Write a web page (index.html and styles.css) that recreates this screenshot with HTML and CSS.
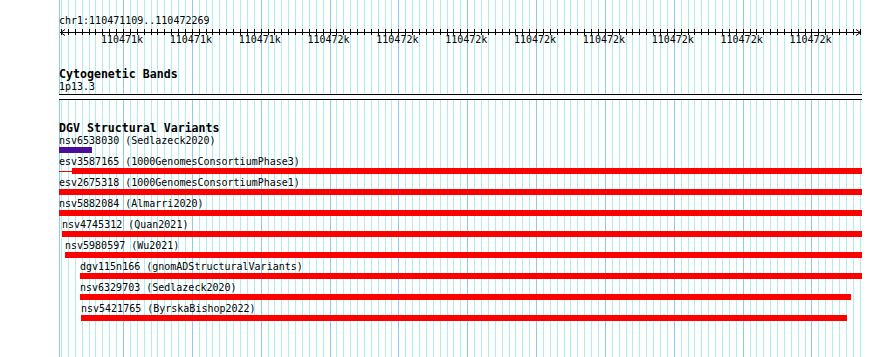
FILE: index.html
```html
<!DOCTYPE html>
<html>
<head>
<meta charset="utf-8">
<link rel="stylesheet" href="styles.css">
</head>
<body>
<div class="view">
  <svg class="grid" width="803" height="357" shape-rendering="crispEdges">
    <path class="grid-edge" d="M0.5 0V357"></path>
    <path class="grid-minor" d=""></path>
    <path class="grid-major" d=""></path>
  </svg>

  <div class="ruler">
    <div class="loc">chr1:110471109..110472269</div>
    <svg class="scale" width="803" height="7" shape-rendering="crispEdges">
      <path class="scale-line" d="M1 5.5H802"></path>
      <path class="scale-ticks" d=""></path>
      <path class="scale-arrow" d="M6 2.5L1.5 5.5L6 8.5" shape-rendering="auto"></path>
      <path class="scale-arrow" d="M797 2.5L801.5 5.5L797 8.5" shape-rendering="auto"></path>
    </svg>
    <div class="scale-labels">
      <span>110471k</span><span>110471k</span><span>110471k</span><span>110472k</span><span>110472k</span><span>110472k</span><span>110472k</span><span>110472k</span><span>110472k</span><span>110472k</span><span>110472k</span>
    </div>
  </div>

  <section class="track cyto">
    <h2 class="track-title">Cytogenetic Bands</h2>
    <div class="band-name">1p13.3</div>
  </section>

  <div class="divider"></div>

  <section class="track dgv">
    <h2 class="track-title">DGV Structural Variants</h2>

    <div class="feature" style="margin-left:0px">
      <div class="label">nsv6538030 (Sedlazeck2020)</div>
      <div class="bar bar-loss" style="width:33px"></div>
    </div>
    <div class="feature" style="margin-left:0px">
      <div class="label">esv3587165 (1000GenomesConsortiumPhase3)</div>
      <div class="bar-wrap">
        <div class="stub" style="width:13px"></div>
        <div class="bar bar-gain" style="width:790px"></div>
      </div>
    </div>
    <div class="feature" style="margin-left:0px">
      <div class="label">esv2675318 (1000GenomesConsortiumPhase1)</div>
      <div class="bar bar-gain" style="width:803px"></div>
    </div>
    <div class="feature" style="margin-left:0px">
      <div class="label">nsv5882084 (Almarri2020)</div>
      <div class="bar bar-gain" style="width:803px"></div>
    </div>
    <div class="feature" style="margin-left:3px">
      <div class="label">nsv4745312 (Quan2021)</div>
      <div class="bar bar-gain" style="width:800px"></div>
    </div>
    <div class="feature" style="margin-left:6px">
      <div class="label">nsv5980597 (Wu2021)</div>
      <div class="bar bar-gain" style="width:797px"></div>
    </div>
    <div class="feature" style="margin-left:21px">
      <div class="label">dgv115n166 (gnomADStructuralVariants)</div>
      <div class="bar bar-gain" style="width:782px"></div>
    </div>
    <div class="feature" style="margin-left:21px">
      <div class="label">nsv6329703 (Sedlazeck2020)</div>
      <div class="bar bar-gain" style="width:771px"></div>
    </div>
    <div class="feature" style="margin-left:22px">
      <div class="label">nsv5421765 (ByrskaBishop2022)</div>
      <div class="bar bar-gain" style="width:766px"></div>
    </div>
  </section>
</div>
<script src="script.js"></script>
</body>
</html>
```

FILE: styles.css
```css
html, body {
  margin: 0;
  padding: 0;
  background: #ffffff;
  overflow: hidden;
}

body {
  font-family: "DejaVu Sans Mono", "Liberation Mono", monospace;
  font-size: 10px;
  color: #000000;
  width: 890px;
  height: 357px;
}

.view {
  position: relative;
  margin-left: 59px;
  width: 803px;
  height: 357px;
}

.grid {
  position: absolute;
  left: 0;
  top: 0;
  z-index: 0;
}

.grid-minor {
  stroke: #afeeee;
  stroke-width: 1;
  fill: none;
}

.grid-major,
.grid-edge {
  stroke: #8ccaf0;
  stroke-width: 1;
  fill: none;
}

.ruler,
.track,
.divider {
  position: relative;
  z-index: 1;
}

.loc {
  padding-top: 15px;
  height: 12px;
  line-height: 12px;
  white-space: nowrap;
}

.scale {
  display: block;
  overflow: visible;
}

.scale-line,
.scale-ticks,
.scale-arrow {
  stroke: #000000;
  stroke-width: 1;
  fill: none;
}

.scale-labels {
  display: flex;
  height: 12px;
  line-height: 12px;
  padding-left: 28.6px;
}

.scale-labels span {
  flex: 0 0 68.85px;
  text-align: center;
  white-space: nowrap;
}

.track-title {
  margin: 0;
  font-size: 11.6px;
  font-weight: bold;
  height: 14px;
  line-height: 14px;
  white-space: nowrap;
}

.cyto {
  margin-top: 21px;
}

.band-name {
  height: 12px;
  line-height: 12px;
}

.divider {
  margin-top: 1px;
  height: 4px;
  background: #ffffff;
  border-top: 1px solid #000000;
  border-bottom: 1px solid #000000;
}

.dgv {
  margin-top: 21px;
}

.feature {
  height: 21px;
}

.label {
  height: 12px;
  line-height: 12px;
  white-space: nowrap;
}

.bar-wrap {
  display: flex;
  align-items: center;
  height: 6px;
}

.stub {
  height: 1px;
  background: #ff0000;
}

.bar {
  height: 6px;
}

.bar-gain {
  background: #ff0000;
}

.bar-loss {
  background: #4a0f9a;
}
```

FILE: script.js
```js
(function () {
  var minor = '';
  var major = '';
  var ticks = '';
  for (var k = 0; k < 117; k++) {
    var x = Math.round(2 + 6.885 * k) + 0.5;
    if (k % 10 === 9) {
      major += 'M' + x + ' 0V357';
    } else {
      minor += 'M' + x + ' 0V357';
    }
    ticks += 'M' + x + ' 2V8';
  }
  document.querySelector('.grid-minor').setAttribute('d', minor);
  document.querySelector('.grid-major').setAttribute('d', major);
  document.querySelector('.scale-ticks').setAttribute('d', ticks);
})();
```
